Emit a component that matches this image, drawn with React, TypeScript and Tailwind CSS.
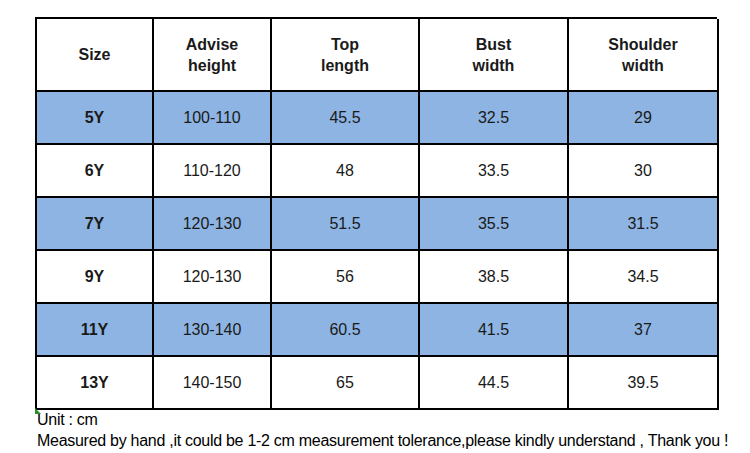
const header = [
  ["Size"],
  ["Advise", "height"],
  ["Top", "length"],
  ["Bust", "width"],
  ["Shoulder", "width"],
];

const rows = [
  ["5Y", "100-110", "45.5", "32.5", "29"],
  ["6Y", "110-120", "48", "33.5", "30"],
  ["7Y", "120-130", "51.5", "35.5", "31.5"],
  ["9Y", "120-130", "56", "38.5", "34.5"],
  ["11Y", "130-140", "60.5", "41.5", "37"],
  ["13Y", "140-150", "65", "44.5", "39.5"],
];

export default function App() {
  return (
    <div
      className="w-[750px] h-[453px] bg-white overflow-hidden text-[#1a1a1a]"
      style={{ fontFamily: '"Liberation Sans", Arial, sans-serif' }}
    >
      <div className="pt-[17px] pl-[35px]">
        <div className="relative w-[682px] grid grid-cols-[117px_118px_148px_149px_150px] border-l-2 border-t-2 border-black">
          {header.map((h, i) => (
            <div
              key={i}
              className="h-[73px] border-r-2 border-b-2 border-black flex flex-col items-center justify-center font-bold text-[16px] leading-[21px]"
            >
              {h.map((t) => (
                <span key={t}>{t}</span>
              ))}
            </div>
          ))}
          {rows.map((r, ri) =>
            r.map((c, ci) => (
              <div
                key={ri + "-" + ci}
                className={
                  "h-[53px] border-r-2 border-b-2 border-black flex items-center justify-center text-[16px] " +
                  (ri % 2 === 0 ? "bg-[#8db4e2] " : "bg-white ") +
                  (ci === 0 ? "font-bold" : "")
                }
              >
                {c}
              </div>
            ))
          )}
          <div className="absolute left-[-2px] bottom-[-4px] w-0 h-0 border-t-[6px] border-t-transparent border-l-[6px] border-l-[#2e8b2e]" />
        </div>
        <div className="pl-[2px] -mt-[1px] text-[16px] leading-[21px] text-black tracking-[-0.28px]">
          <div>Unit : cm</div>
          <div>
            Measured by hand ,it could be 1-2 cm measurement tolerance,please kindly understand , Thank you !
          </div>
        </div>
      </div>
    </div>
  );
}
